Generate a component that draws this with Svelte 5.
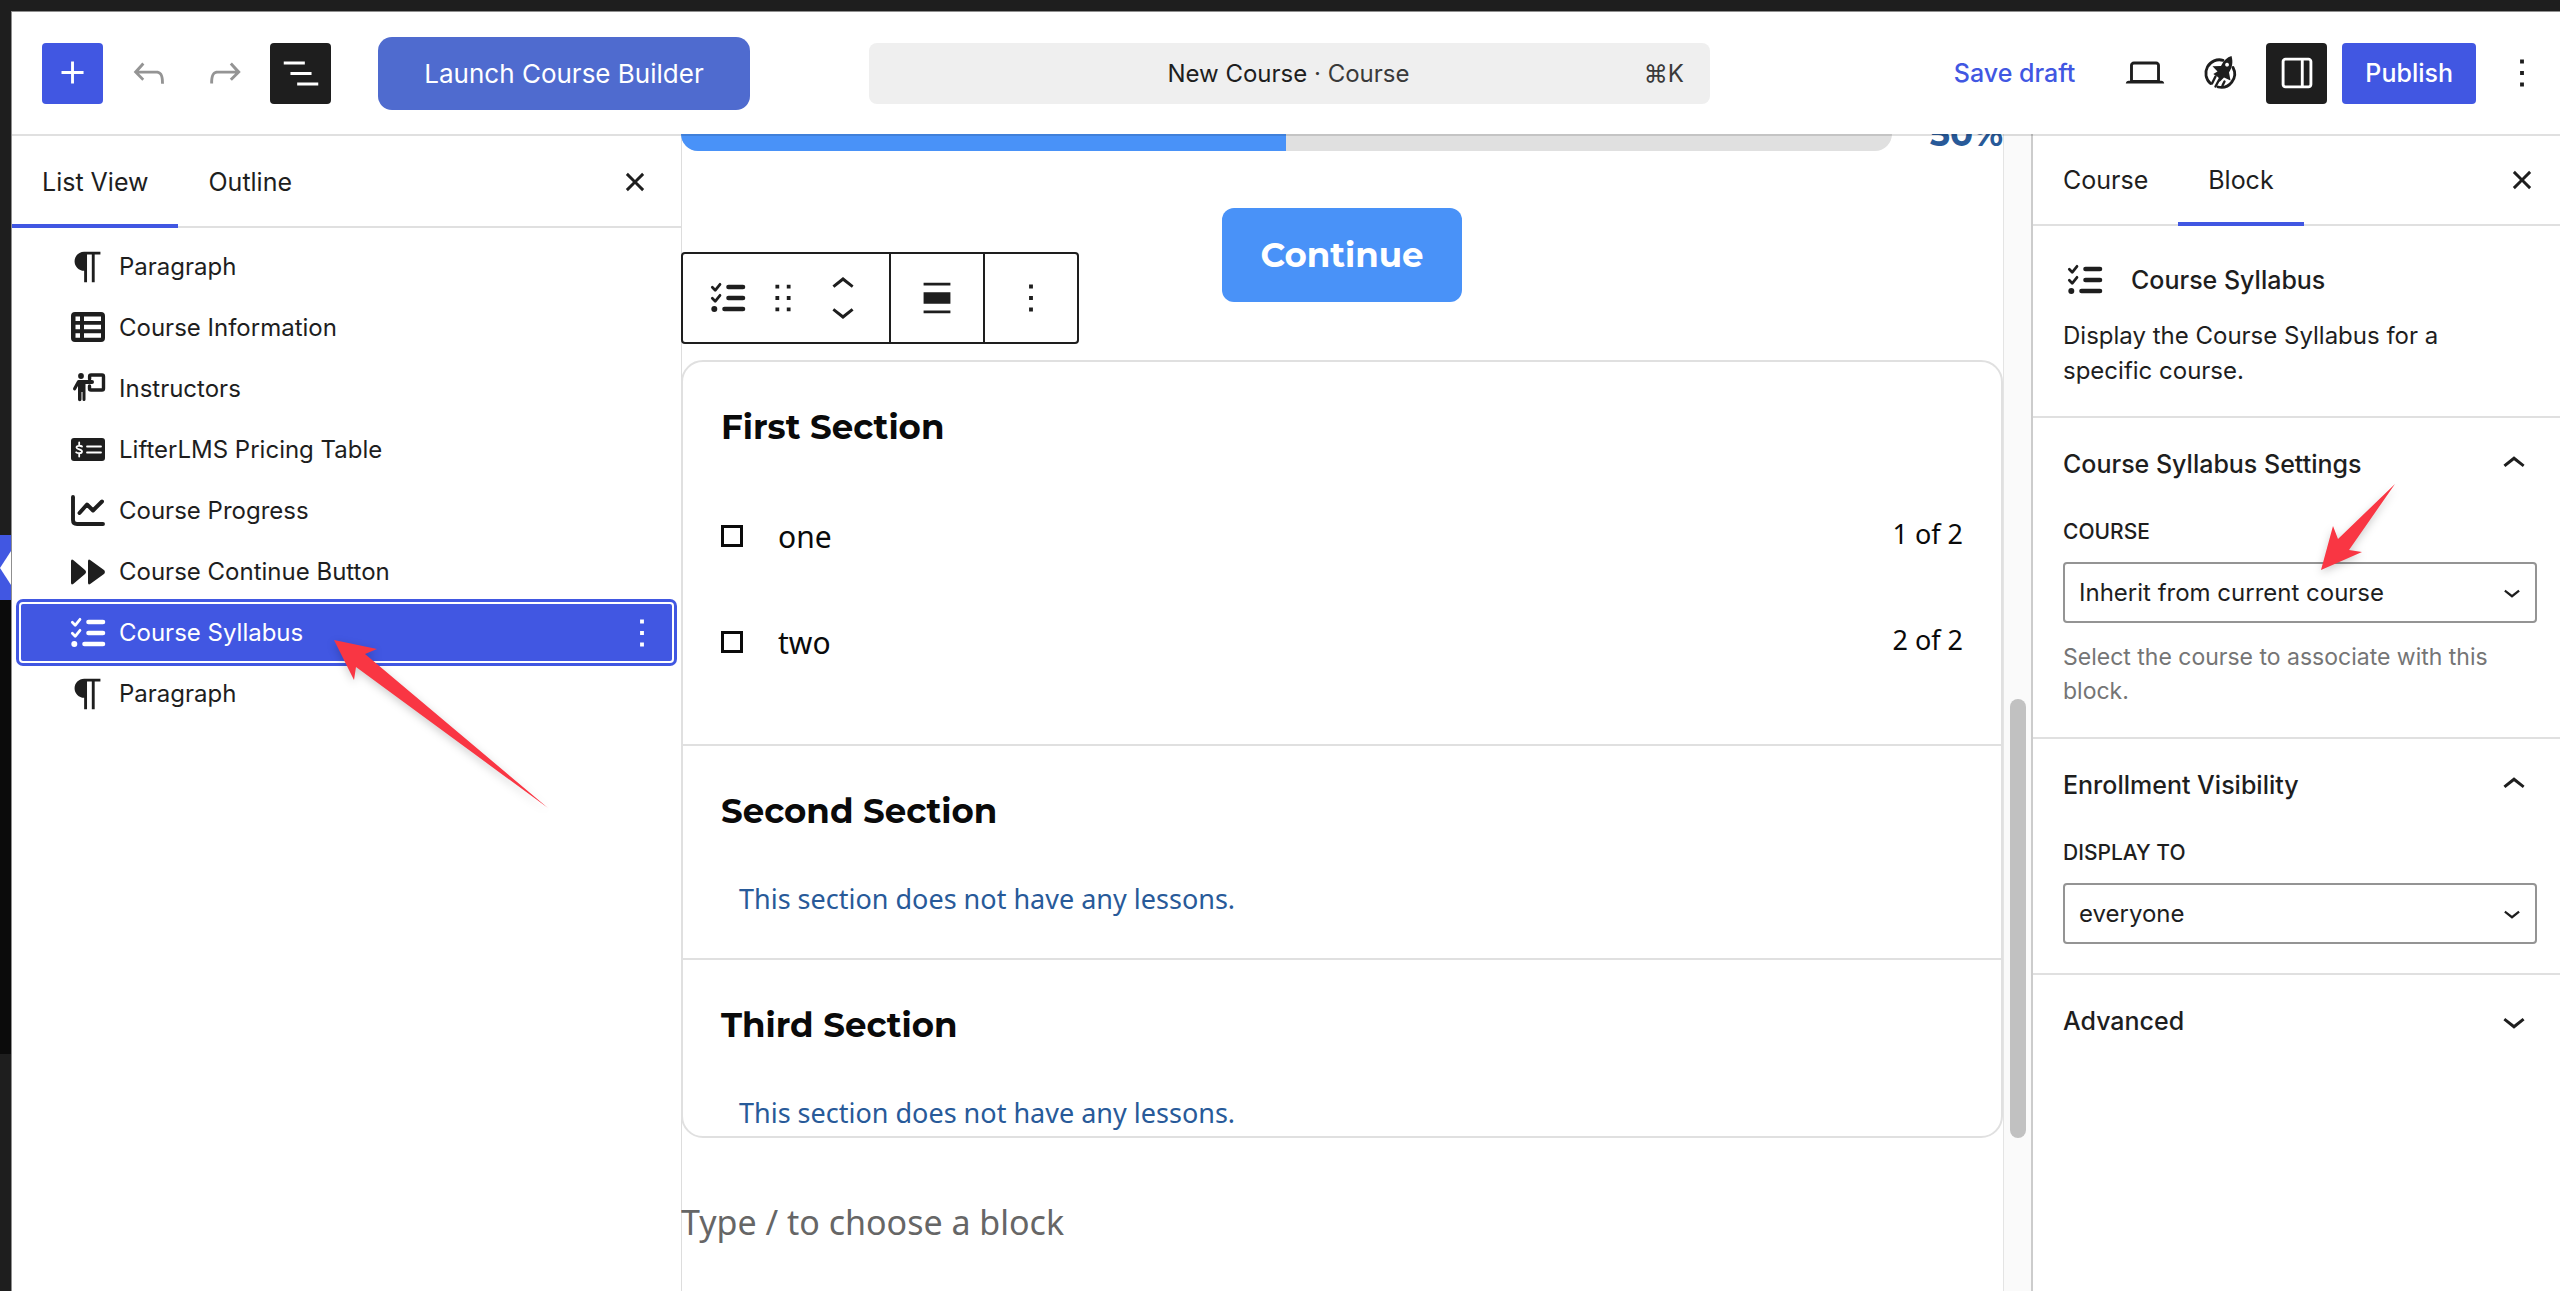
<script lang="ts">
	let activeBlock = $state(6);
	let course = $state('inherit');
	let displayTo = $state('everyone');
	let openPanels = $state({ syllabus: true, visibility: true, advanced: false });

	const progress = 50;

	const blocks = [
		{ icon: 'paragraph', label: 'Paragraph' },
		{ icon: 'table', label: 'Course Information' },
		{ icon: 'teacher', label: 'Instructors' },
		{ icon: 'pricing', label: 'LifterLMS Pricing Table' },
		{ icon: 'chart', label: 'Course Progress' },
		{ icon: 'forward', label: 'Course Continue Button' },
		{ icon: 'checklist', label: 'Course Syllabus' },
		{ icon: 'paragraph', label: 'Paragraph' }
	];

	const sections = [
		{ title: 'First Section', lessons: ['one', 'two'] },
		{ title: 'Second Section', lessons: [] },
		{ title: 'Third Section', lessons: [] }
	];
</script>

{#snippet glyph(d: string)}
	<svg class="glyph" viewBox="0 0 24 24" aria-hidden="true"><path {d} /></svg>
{/snippet}

{#snippet chevron(open: boolean)}
	{@render glyph(
		open
			? 'M6.5 12.4L12 8l5.5 4.4-.9 1.2L12 10l-4.5 3.6-1-1.2z'
			: 'M17.5 11.6L12 16l-5.5-4.4.9-1.2L12 14l4.5-3.6 1 1.2z'
	)}
{/snippet}

{#snippet dots()}
	{@render glyph('M13 19h-2v-2h2v2zm0-6h-2v-2h2v2zm0-6h-2V5h2v2z')}
{/snippet}

{#snippet close()}
	{@render glyph(
		'M12 13.06l3.712 3.713 1.061-1.06L13.061 12l3.712-3.712-1.06-1.06L12 10.938 8.288 7.227l-1.061 1.06L10.939 12l-3.712 3.712 1.06 1.061L12 13.061z'
	)}
{/snippet}

{#snippet blockIcon(name: string)}
	<svg class="block-icon" viewBox="0 0 36 36" aria-hidden="true">
		{#if name === 'paragraph'}
			<path
				transform="translate(-5 -5) scale(1.915)"
				d="m9.996 14v-.225h.004v6.225h1.5v-14.5h2.5v14.5h1.5v-14.5h3v-1.5h-8.504c-2.761 0-5 2.239-5 5s2.239 5 5 5z"
			/>
		{:else if name === 'table'}
			<path
				fill-rule="evenodd"
				d="M5 2h26a4 4 0 0 1 4 4v22a4 4 0 0 1-4 4H5a4 4 0 0 1-4-4V6a4 4 0 0 1 4-4zM5.500 6.500v4.500h4.500V6.500zm8.500 0v4.500h17V6.500zM5.500 14.800v4.500h4.500v-4.500zm8.500 0v4.500h17v-4.500zM5.500 23.200v4.500h4.500v-4.500zm8.500 0v4.500h17v-4.500z"
			/>
		{:else if name === 'teacher'}
			<circle cx="11" cy="5" r="2.900" />
			<path
				d="M8.500 9H22a2 2 0 0 1 0 4h-6.500v15.500a1.500 1.500 0 0 1-3 0V21h-1v7.500a1.500 1.500 0 0 1-3.500 0V15l-2 3.500a1.500 1.500 0 0 1-2.800-1.500l3.300-6C7.100 9.700 7.600 9 8.500 9z"
			/>
			<path
				class="line"
				stroke-width="3.400"
				d="M19.600 8V5.500a1.500 1.500 0 0 1 1.500-1.500H32a1.500 1.500 0 0 1 1.500 1.500v12a1.500 1.500 0 0 1-1.500 1.500H21a1.500 1.500 0 0 1-1.500-1.500V15"
			/>
		{:else if name === 'pricing'}
			<rect x="1" y="6" width="34" height="23" rx="3" />
			<path
				class="line cut"
				stroke-width="1.800"
				d="M12 14.500c-1-1-5.500-1.200-5.500 1s5.500 1.700 5.500 4-4.500 2-5.800.8M9.200 10.500v2.500m0 9v2.500M17 14.500h14M17 20.500h14"
			/>
		{:else if name === 'chart'}
			<path class="line" stroke-width="3.900" d="M3 4v23q0 4 4 4h26M9.500 20l7.500-8.500 6 6L32 8.500" />
		{:else if name === 'forward'}
			<path
				d="M1 7.500q0-3 2.500-1.300L15 16q2 2 0 4L3.500 29.800Q1 31.500 1 28.500zM18 7.500q0-3 2.500-1.300L34.300 16.300q1.400 1.700 0 3.400L20.500 29.800Q18 31.500 18 28.500z"
			/>
		{:else}
			<path class="line" stroke-width="2.700" d="M2.300 7.300l2.900 3L10 4.300M2.300 18.300l2.900 3L10 15.300" />
			<path class="line" stroke-width="4.600" d="M18.500 7H33M18.500 18H33M14.500 29H33" />
			<circle cx="4.300" cy="29" r="3" />
		{/if}
	</svg>
{/snippet}

<div class="screen">
	<div class="rail" aria-hidden="true">
		<div class="rail-menu"></div>
		<div class="rail-current">
			<svg viewBox="0 0 11 34"><path d="M11 0v34L0 17z" /></svg>
		</div>
		<div class="rail-submenu"></div>
	</div>

	<div class="editor">
		<header class="topbar">
			<div class="tools">
				<button class="icon-button primary" type="button" aria-label="Toggle block inserter">
					{@render glyph('M11 12.500V17.500H12.500V12.500H17.500V11H12.500V6H11V11H6V12.500H11Z')}
				</button>
				<button class="icon-button muted" type="button" aria-label="Undo">
					{@render glyph(
						'M18.3 11.7c-.6-.6-1.4-.9-2.3-.9H6.7l2.9-3.3-1.1-1-4.5 5L8.500 16l1-1-2.700-2.700H16c.5 0 .9.2 1.3.5 1 1 1 3.4 1 4.5v.3h1.5v-.2c0-1.5 0-4.3-1.500-5.700z'
					)}
				</button>
				<button class="icon-button muted" type="button" aria-label="Redo">
					{@render glyph(
						'M15.6 6.500l-1.1 1 2.900 3.300H8c-.9 0-1.700.3-2.300.9-1.400 1.500-1.400 4.200-1.400 5.600v.2h1.500v-.3c0-1.100 0-3.500 1-4.500.3-.3.7-.5 1.300-.5h9.200L14.500 15l1.100 1.100 4.600-4.600-4.600-5z'
					)}
				</button>
				<button class="icon-button dark" type="button" aria-label="Document overview">
					{@render glyph('M3 6h11v1.500H3V6Zm3.500 5.500h11V13h-11v-1.500ZM21 17H10v1.500h11V17Z')}
				</button>
				<button class="launch" type="button">Launch Course Builder</button>
			</div>

			<button class="command" type="button">
				<span class="command-title">New Course <span class="soft">· Course</span></span>
				<kbd>⌘K</kbd>
			</button>

			<div class="actions">
				<button class="save" type="button">Save draft</button>
				<button class="icon-button" type="button" aria-label="View">
					{@render glyph(
						'M20.5 16h-.7V8c0-1.100-.9-2-2-2H6.200c-1.100 0-2 .9-2 2v8h-.7c-.8 0-1.500.7-1.500 1.500h20c0-.8-.7-1.500-1.500-1.500zM5.700 8c0-.3.2-.5.5-.5h11.600c.3 0 .5.2.5.5v7.600H5.700V8z'
					)}
				</button>
				<button class="icon-button" type="button" aria-label="LifterLMS">
					<svg class="rocket" viewBox="0 0 50 50" aria-hidden="true">
						<path
							class="line"
							stroke-width="2.800"
							d="M27 12.300A13.500 13.500 0 0 0 14.500 35.500M37 19.500A13.500 13.500 0 0 1 22 39"
						/>
						<path
							fill-rule="evenodd"
							d="M35.500 8c1.800 6 .8 11.500-2.500 16.500l1.500 8-6.500-3-4.500 4.500-1.200-4.700-5-3.300 4.200-2.600-5-5.200 8.500-.3C27.500 12.500 31 9.300 35.500 8zM31 14.800a1.900 1.900 0 1 0 .1 0z"
						/>
						<path class="line" stroke-width="2.400" d="M19.500 28.500l-3.500 7M23 32l-3.500 6.500M28.500 33.500l-2 4" />
					</svg>
				</button>
				<button class="icon-button dark" type="button" aria-label="Settings">
					{@render glyph(
						'M18 4H6c-1.100 0-2 .9-2 2v12c0 1.100.9 2 2 2h12c1.100 0 2-.9 2-2V6c0-1.100-.9-2-2-2zm-4 14.500H6c-.3 0-.5-.2-.5-.5V6c0-.3.2-.5.5-.5h8v13zm4.500-.5c0 .3-.2.5-.5.5h-2.500v-13H18c.3 0 .5.2.5.5v12z'
					)}
				</button>
				<button class="publish" type="button">Publish</button>
				<button class="options" type="button" aria-label="Options">{@render dots()}</button>
			</div>
		</header>

		<div class="body">
			<aside class="list-view">
				<div class="tabs">
					<button class="tab active" type="button">List View</button>
					<button class="tab" type="button">Outline</button>
					<button class="close" type="button" aria-label="Close">{@render close()}</button>
				</div>
				<ul>
					{#each blocks as block, index (index)}
						<li class:selected={activeBlock === index}>
							<button class="block" type="button" onclick={() => (activeBlock = index)}>
								{@render blockIcon(block.icon)}
								{block.label}
							</button>
							{#if activeBlock === index}
								<button class="block-options" type="button" aria-label="Options">
									{@render dots()}
								</button>
								<svg class="arrow-block" viewBox="0 0 214 168" aria-hidden="true">
									<path d="M0 0L43 9L31 14L214 168L22 27L20 40z" />
								</svg>
							{/if}
						</li>
					{/each}
				</ul>
			</aside>

			<main class="canvas">
				<div class="progress">
					<div class="track"><div class="fill" style="width: {progress}%"></div></div>
					<span class="percent">{progress}%</span>
				</div>

				<button class="continue" type="button">Continue</button>

				<div class="syllabus">
					<div class="toolbar">
						<div class="group">
							<button type="button" aria-label="Course Syllabus">{@render blockIcon('checklist')}</button>
							<button type="button" aria-label="Drag">
								<svg class="drag" viewBox="0 0 18 18" aria-hidden="true">
									<path
										d="M5 4h2V2H5v2zm6-2v2h2V2h-2zm-6 8h2V8H5v2zm6 0h2V8h-2v2zm-6 6h2v-2H5v2zm6 0h2v-2h-2v2z"
									/>
								</svg>
							</button>
							<div class="movers">
								<button type="button" aria-label="Move up">
									<svg viewBox="0 0 24 12" aria-hidden="true">
										<path d="M6.500 5.500L12 1.100l5.500 4.400-.9 1.200L12 3.100 7.500 6.700l-1-1.200z" />
									</svg>
								</button>
								<button type="button" aria-label="Move down">
									<svg viewBox="0 0 24 12" aria-hidden="true">
										<path d="M17.500 6.500L12 10.900 6.500 6.500l.9-1.200L12 8.900l4.500-3.600 1 1.200z" />
									</svg>
								</button>
							</div>
						</div>
						<div class="group narrow">
							<button type="button" aria-label="Align">
								{@render glyph('M19 5.500H5V4h14v1.500ZM19 20H5v-1.500h14V20ZM5 9h14v6H5V9Z')}
							</button>
						</div>
						<div class="group narrow">
							<button type="button" aria-label="Options">{@render dots()}</button>
						</div>
					</div>

					{#each sections as section (section.title)}
						<section>
							<h2>{section.title}</h2>
							{#if section.lessons.length}
								<ol>
									{#each section.lessons as lesson, index (lesson)}
										<li class="lesson">
											<input type="checkbox" id="lesson-{index}" />
											<label for="lesson-{index}">{lesson}</label>
											<span>{index + 1} of {section.lessons.length}</span>
										</li>
									{/each}
								</ol>
							{:else}
								<p>This section does not have any lessons.</p>
							{/if}
						</section>
					{/each}
				</div>

				<p class="placeholder">Type / to choose a block</p>
			</main>

			<div class="scrollbar"><div class="thumb"></div></div>

			<aside class="settings">
				<div class="tabs">
					<button class="tab" type="button">Course</button>
					<button class="tab active" type="button">Block</button>
					<button class="close" type="button" aria-label="Close">{@render close()}</button>
				</div>

				<div class="card">
					<h2>{@render blockIcon('checklist')} Course Syllabus</h2>
					<p>Display the Course Syllabus for a specific course.</p>
				</div>

				<div class="panel">
					<button
						class="panel-title"
						type="button"
						onclick={() => (openPanels.syllabus = !openPanels.syllabus)}
					>
						Course Syllabus Settings
						{@render chevron(openPanels.syllabus)}
					</button>
					{#if openPanels.syllabus}
						<div class="field">
							<label for="course">Course</label>
							<div class="select">
								<select id="course" bind:value={course}>
									<option value="inherit">Inherit from current course</option>
								</select>
								{@render chevron(false)}
								<svg class="arrow-field" viewBox="0 0 74 86" aria-hidden="true">
									<path d="M0 86L12 42L17 55L74 0L28 66L41 68z" />
								</svg>
							</div>
							<p>Select the course to associate with this block.</p>
						</div>
					{/if}
				</div>

				<div class="panel">
					<button
						class="panel-title"
						type="button"
						onclick={() => (openPanels.visibility = !openPanels.visibility)}
					>
						Enrollment Visibility
						{@render chevron(openPanels.visibility)}
					</button>
					{#if openPanels.visibility}
						<div class="field">
							<label for="display-to">Display to</label>
							<div class="select">
								<select id="display-to" bind:value={displayTo}>
									<option value="everyone">everyone</option>
								</select>
								{@render chevron(false)}
							</div>
						</div>
					{/if}
				</div>

				<div class="panel">
					<button
						class="panel-title"
						type="button"
						onclick={() => (openPanels.advanced = !openPanels.advanced)}
					>
						Advanced
						{@render chevron(openPanels.advanced)}
					</button>
				</div>
			</aside>
		</div>
	</div>
</div>

<style>
	:global(body) {
		margin: 0;
		background: #1e1e1e;
	}

	* {
		box-sizing: border-box;
	}

	.screen {
		display: flex;
		height: 100vh;
		padding-top: 11px;
		overflow: hidden;
		background: #1e1e1e;
		color: #1e1e1e;
		font-family: Inter, 'Liberation Sans', sans-serif;
		font-size: 24px;
		line-height: 35px;
	}

	button,
	select,
	kbd {
		font: inherit;
		color: inherit;
	}

	button {
		display: flex;
		align-items: center;
		padding: 0;
		border: 0;
		background: none;
		cursor: pointer;
		white-space: nowrap;
	}

	h2,
	p,
	ul,
	ol {
		margin: 0;
		padding: 0;
	}

	svg {
		display: block;
		flex: none;
		fill: currentColor;
	}

	.glyph {
		width: 46px;
		height: 46px;
	}

	.block-icon {
		width: 36px;
		height: 36px;
	}

	.line {
		fill: none;
		stroke: currentColor;
		stroke-linecap: round;
		stroke-linejoin: round;
	}

	.cut {
		stroke: #fff;
	}

	/* admin menu peeking out on the left */
	.rail {
		display: flex;
		flex: none;
		flex-direction: column;
		width: 11px;
	}

	.rail-menu {
		height: 524px;
	}

	.rail-current {
		display: flex;
		align-items: center;
		height: 65px;
		background: #4157e2;
		color: #fff;
	}

	.rail-current svg {
		width: 11px;
		height: 34px;
	}

	.rail-submenu {
		height: 454px;
		background: #0b0b0b;
	}

	.editor {
		display: flex;
		flex: 1;
		flex-direction: column;
		min-width: 0;
		border-top: 1px solid #8f8f8f;
		border-left: 1px solid #8f8f8f;
		background: #fff;
	}

	.topbar {
		position: relative;
		z-index: 1;
		display: grid;
		grid-template-columns: 1fr minmax(0, 841px) 1fr;
		align-items: center;
		height: 122px;
		flex: none;
		padding: 0 23px 0 30px;
		box-shadow: 0 2px 0 rgba(0, 0, 0, 0.12);
	}

	.tools,
	.actions {
		display: flex;
		align-items: center;
		gap: 15px;
	}

	.actions {
		justify-content: flex-end;
	}

	.icon-button {
		justify-content: center;
		width: 61px;
		height: 61px;
		border-radius: 4px;
	}

	.primary,
	.publish {
		background: #4157e2;
		color: #fff;
	}

	.dark {
		background: #1e1e1e;
		color: #fff;
	}

	.muted {
		color: #949494;
	}

	.rocket {
		width: 50px;
		height: 50px;
	}

	.launch {
		justify-content: center;
		width: 372px;
		height: 73px;
		margin-left: 32px;
		border-radius: 14px;
		background: #4f6bcf;
		color: #fff;
		font-size: 26px;
	}

	.command {
		height: 61px;
		padding: 0 26px;
		border-radius: 8px;
		background: #efefef;
	}

	.command-title {
		flex: 1;
		padding-left: 38px;
	}

	.soft,
	kbd {
		color: #3a3a3a;
	}

	.save {
		padding-right: 24px;
		color: #4157e2;
		font-size: 25px;
		font-weight: 500;
	}

	.publish {
		height: 61px;
		padding: 0 23px;
		border-radius: 4px;
		font-size: 25px;
		font-weight: 500;
	}

	.options {
		justify-content: center;
		width: 30px;
		margin-left: 16px;
	}

	.body {
		display: flex;
		flex: 1;
		min-height: 0;
	}

	.list-view {
		flex: none;
		width: 669px;
	}

	.tabs {
		display: flex;
		height: 94px;
		padding-top: 2px;
		box-shadow: inset 0 -2px 0 #e0e0e0;
	}

	.settings .tabs {
		height: 92px;
		padding-top: 0;
	}

	.tab {
		padding: 0 30px;
		font-size: 25px;
	}

	.tab.active {
		box-shadow: inset 0 -4px 0 #4157e2;
	}

	.close {
		margin-left: auto;
		padding-right: 23px;
	}

	.settings .close {
		padding-right: 15px;
	}

	ul {
		padding: 8px 7px;
		list-style: none;
	}

	li {
		position: relative;
		display: flex;
	}

	ul li {
		height: 61px;
		border-radius: 4px;
	}

	.selected {
		background: #4157e2;
		color: #fff;
		box-shadow:
			0 0 0 3px #4157e2,
			inset 0 0 0 2px #fff;
	}

	.block {
		flex: 1;
		gap: 13px;
		padding-left: 51px;
	}

	.block-options {
		padding-right: 9px;
	}

	.arrow-block,
	.arrow-field {
		position: absolute;
		color: #f93643;
		filter: drop-shadow(0 3px 4px rgba(0, 0, 0, 0.2));
		pointer-events: none;
		z-index: 1;
	}

	.arrow-block {
		top: 38px;
		left: 315px;
		width: 214px;
		height: 168px;
	}

	.arrow-field {
		right: 142px;
		bottom: 53px;
		width: 74px;
		height: 86px;
	}

	.canvas {
		display: flex;
		flex: 1;
		flex-direction: column;
		min-width: 0;
		overflow: hidden;
		border-right: 1px solid #e4e4e4;
		box-shadow: inset 1px 0 0 #ddd;
		color: #0a0a0a;
		font-family: 'Noto Sans', sans-serif;
	}

	/* scrolled partly under the top bar */
	.progress {
		display: flex;
		flex: none;
		align-items: center;
		gap: 38px;
		height: 34px;
		margin-top: -17px;
	}

	.track {
		flex: 1;
		height: 34px;
		overflow: hidden;
		border-radius: 17px;
		background: #e0e0e0;
	}

	.fill {
		height: 34px;
		background: #4992f8;
	}

	.percent {
		color: #285a99;
		font-family: Montserrat, Inter, sans-serif;
		font-size: 34px;
		font-weight: 700;
	}

	.continue {
		align-self: center;
		flex: none;
		height: 94px;
		margin: 57px 0 58px;
		padding: 0 38px;
		border-radius: 12px;
		background: #4992f8;
		color: #fff;
		font-family: Montserrat, Inter, sans-serif;
		font-size: 34px;
		font-weight: 700;
	}

	.syllabus {
		position: relative;
		flex: none;
		border: 2px solid #e0e0e0;
		border-radius: 22px;
	}

	.toolbar {
		position: absolute;
		bottom: calc(100% + 18px);
		left: -2px;
		display: flex;
		height: 92px;
		border: 2px solid #1e1e1e;
		border-radius: 4px;
		background: #fff;
		color: #1e1e1e;
	}

	.group {
		display: flex;
		align-items: center;
		gap: 20px;
		padding: 0 23px 0 27px;
	}

	.group + .group {
		border-left: 2px solid #1e1e1e;
	}

	.narrow {
		justify-content: center;
		width: 94px;
		padding: 0;
	}

	.drag {
		width: 34px;
		height: 34px;
	}

	.movers svg {
		width: 46px;
		height: 23px;
	}

	section {
		padding: 40px 38px 36px;
	}

	section + section {
		border-top: 2px solid #e0e0e0;
	}

	section:last-child {
		padding-bottom: 0;
	}

	section h2 {
		height: 50px;
		font-family: Montserrat, Inter, sans-serif;
		font-size: 34px;
		font-weight: 700;
		line-height: 50px;
	}

	section p {
		padding: 40px 18px 0;
		color: #285a99;
		font-size: 27px;
		line-height: 46px;
	}

	ol {
		padding: 31px 0 13px;
		list-style: none;
	}

	.lesson {
		align-items: center;
		height: 106px;
	}

	.lesson input {
		width: 22px;
		height: 22px;
		margin: 0 35px 0 0;
		border: 3px solid #0a0a0a;
		appearance: none;
	}

	.lesson label {
		flex: 1;
		font-size: 30px;
	}

	.lesson span {
		padding-bottom: 6px;
		font-size: 27px;
	}

	.placeholder {
		margin-top: 59px;
		color: #666;
		font-size: 34px;
		line-height: 50px;
	}

	.scrollbar {
		display: flex;
		flex: none;
		flex-direction: column;
		align-items: center;
		width: 27px;
		background: #fafafa;
	}

	.thumb {
		width: 16px;
		height: 439px;
		margin-top: 565px;
		border-radius: 8px;
		background: #c1c1c1;
	}

	.settings {
		flex: none;
		width: 529px;
		border-left: 2px solid #ccc;
	}

	.card,
	.panel {
		padding: 0 23px 0 30px;
		border-bottom: 2px solid #e0e0e0;
	}

	.panel:last-child {
		border-bottom: 0;
	}

	.card {
		padding-top: 36px;
		padding-bottom: 28px;
	}

	.card h2 {
		display: flex;
		align-items: center;
		gap: 28px;
		padding: 0 4px;
		font-size: 25px;
		font-weight: 500;
	}

	.card p {
		padding: 20px 40px 0 0;
	}

	.panel-title {
		justify-content: space-between;
		width: 100%;
		height: 92px;
		font-size: 25px;
		font-weight: 500;
	}

	.field {
		padding: 6px 0 29px;
	}

	.field label {
		display: block;
		padding-bottom: 14px;
		font-size: 21px;
		font-weight: 500;
		line-height: 32px;
		text-transform: uppercase;
	}

	.field p {
		padding-top: 17px;
		color: #757575;
		font-size: 23px;
		line-height: 34px;
	}

	.select {
		position: relative;
	}

	.select select {
		display: block;
		width: 100%;
		height: 61px;
		padding: 0 50px 0 14px;
		border: 2px solid #949494;
		border-radius: 4px;
		background: #fff;
		appearance: none;
	}

	.select .glyph {
		position: absolute;
		top: 13px;
		right: 8px;
		width: 34px;
		height: 34px;
		pointer-events: none;
	}
</style>
